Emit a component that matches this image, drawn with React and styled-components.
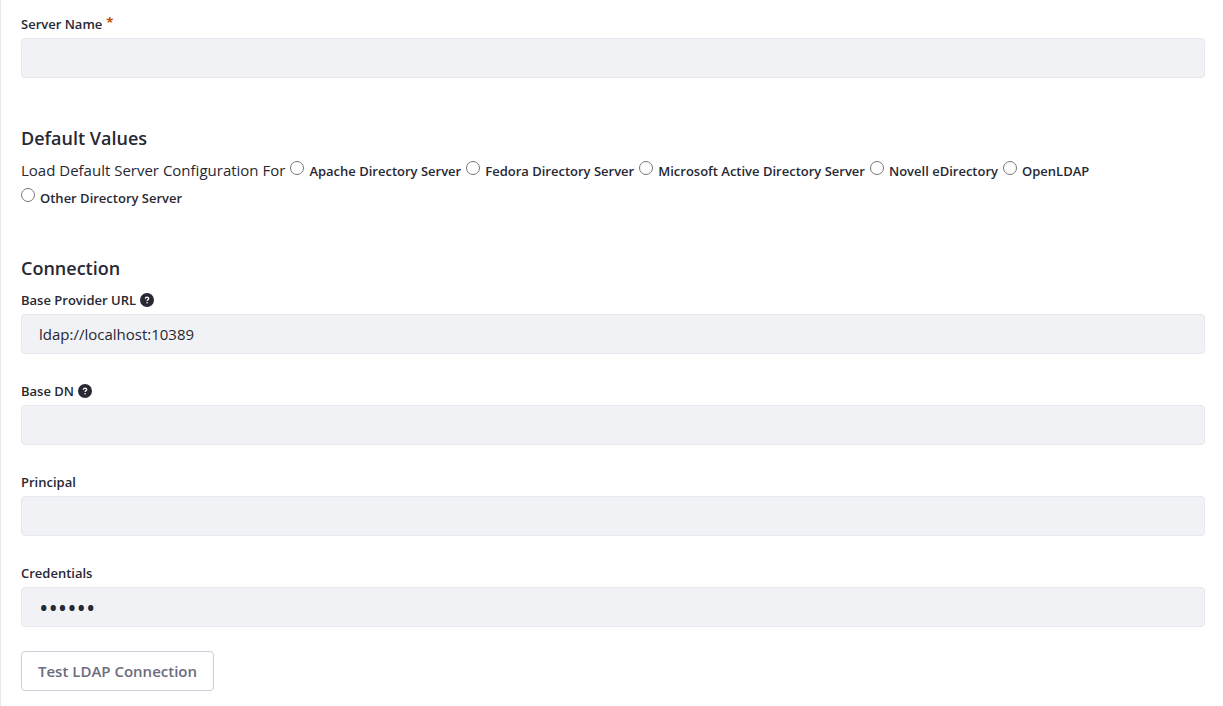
import React from "react";
import styled, { createGlobalStyle } from "styled-components";

const Global = createGlobalStyle`
  *, *::before, *::after { box-sizing: border-box; }
  body {
    margin: 0;
    background: #fff;
    color: #272833;
    font-family: "Segoe UI", "Open Sans", "Noto Sans", sans-serif;
    font-size: 15px;
    line-height: 24px;
  }
`;

const Sheet = styled.form`
  min-height: 100vh;
  padding: 11px 18px 15px 20px;
  border-left: 1px solid #e7e7ed;
`;

const Section = styled.section`
  margin-bottom: ${(p) => p.$gap}px;
`;

const Heading = styled.h3`
  margin: 0 0 7px;
  font-size: 18px;
  font-weight: 600;
  line-height: 24px;
`;

const Field = styled.div`
  margin-bottom: 24px;
`;

const LabelRow = styled.div`
  display: flex;
  align-items: center;
  gap: 4px;
  height: 26px;
  margin-bottom: 1px;
`;

const Label = styled.label`
  font-size: 13px;
  font-weight: 600;
`;

const Required = styled.span`
  margin-left: 4px;
  color: #b95000;
  font-size: 13px;
  font-weight: 700;
  vertical-align: 2px;
  line-height: 16px;
`;

const Input = styled.input`
  display: block;
  width: 100%;
  height: 40px;
  padding: 0 17px;
  border: 1px solid #e7e7ed;
  border-radius: 4px;
  background: #f1f2f5;
  color: #272833;
  font-family: inherit;
  font-size: 15px;

  &[type="password"] {
    font-size: 25px;
  }
`;

const Options = styled.div`
  display: flex;
  flex-wrap: wrap;
  align-items: baseline;
  column-gap: 5px;
  row-gap: 1px;
  line-height: 26px;
`;

const Option = styled.span`
  display: flex;
  align-items: baseline;
  gap: 5px;
`;

const Radio = styled.input`
  align-self: flex-start;
  width: 14px;
  height: 14px;
  margin: 3px 0 0;
`;

const Button = styled.button`
  height: 40px;
  padding: 0 16px;
  border: 1px solid #cdced9;
  border-radius: 4px;
  background: #fff;
  color: #6b6c7e;
  font-family: inherit;
  font-size: 15px;
  font-weight: 600;
`;

const HelpIcon = () => (
  <svg width="14" height="14" viewBox="0 0 14 14" role="img" aria-label="Help">
    <circle cx="7" cy="7" r="7" fill="#272833" />
    <path
      d="M5.4 5.7C5.4 4.7 6.1 4.2 7 4.2s1.7.5 1.7 1.4c0 1.2-1.6 1.2-1.6 2.4"
      fill="none"
      stroke="#fff"
      strokeWidth="1.3"
    />
    <circle cx="7.1" cy="9.7" r=".8" fill="#fff" />
  </svg>
);

const servers = [
  ["apache", "Apache Directory Server"],
  ["fedora", "Fedora Directory Server"],
  ["microsoft", "Microsoft Active Directory Server"],
  ["novell", "Novell eDirectory"],
  ["open", "OpenLDAP"],
  ["other", "Other Directory Server"],
];

function TextField({ id, label, help, required, ...rest }) {
  return (
    <Field>
      <LabelRow>
        <Label htmlFor={id}>
          {label}
          {required && <Required>*</Required>}
        </Label>
        {help && <HelpIcon />}
      </LabelRow>
      <Input id={id} {...rest} />
    </Field>
  );
}

export default function App() {
  return (
    <>
      <Global />
      <Sheet>
        <Section $gap={48}>
          <TextField id="serverName" label="Server Name" required />
        </Section>
        <Section $gap={45}>
          <Heading>Default Values</Heading>
          <Options role="radiogroup" aria-labelledby="defaults">
            <span id="defaults">Load Default Server Configuration For</span>
            {servers.map(([id, name]) => (
              <Option key={id}>
                <Radio type="radio" name="defaults" id={id} />
                <Label htmlFor={id}>{name}</Label>
              </Option>
            ))}
          </Options>
        </Section>
        <Heading>Connection</Heading>
        <TextField id="url" label="Base Provider URL" help defaultValue="ldap://localhost:10389" />
        <TextField id="baseDn" label="Base DN" help />
        <TextField id="principal" label="Principal" autoComplete="off" />
        <TextField id="credentials" label="Credentials" type="password" defaultValue="secret" />
        <Button type="button">Test LDAP Connection</Button>
      </Sheet>
    </>
  );
}
